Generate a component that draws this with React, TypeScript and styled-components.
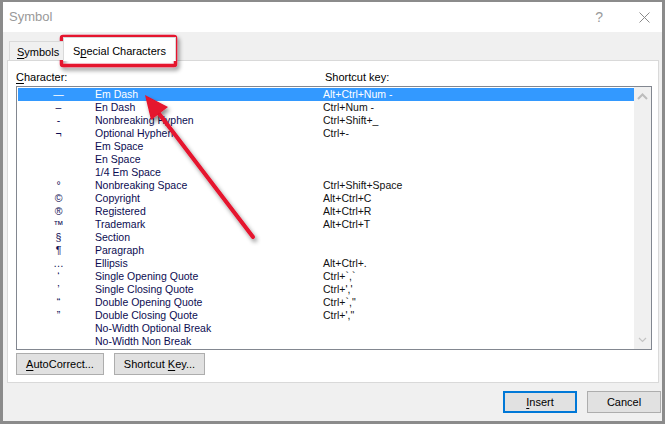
import styled, { createGlobalStyle } from "styled-components";

const GlobalStyle = createGlobalStyle`
  html, body {
    margin: 0;
    padding: 0;
    background: #ffffff;
  }
  body {
    font-family: "Liberation Sans", Arial, sans-serif;
  }
`;

type Entry = { char: string; name: string; keys: string };

const entries: Entry[] = [
  { char: "\u2014", name: "Em Dash", keys: "Alt+Ctrl+Num -" },
  { char: "\u2013", name: "En Dash", keys: "Ctrl+Num -" },
  { char: "-", name: "Nonbreaking Hyphen", keys: "Ctrl+Shift+_" },
  { char: "\u00ac", name: "Optional Hyphen", keys: "Ctrl+-" },
  { char: "", name: "Em Space", keys: "" },
  { char: "", name: "En Space", keys: "" },
  { char: "", name: "1/4 Em Space", keys: "" },
  { char: "\u00b0", name: "Nonbreaking Space", keys: "Ctrl+Shift+Space" },
  { char: "\u00a9", name: "Copyright", keys: "Alt+Ctrl+C" },
  { char: "\u00ae", name: "Registered", keys: "Alt+Ctrl+R" },
  { char: "\u2122", name: "Trademark", keys: "Alt+Ctrl+T" },
  { char: "\u00a7", name: "Section", keys: "" },
  { char: "\u00b6", name: "Paragraph", keys: "" },
  { char: "\u2026", name: "Ellipsis", keys: "Alt+Ctrl+." },
  { char: "\u2018", name: "Single Opening Quote", keys: "Ctrl+`,`" },
  { char: "\u2019", name: "Single Closing Quote", keys: "Ctrl+','" },
  { char: "\u201c", name: "Double Opening Quote", keys: "Ctrl+`,\"" },
  { char: "\u201d", name: "Double Closing Quote", keys: "Ctrl+',\"" },
  { char: "", name: "No-Width Optional Break", keys: "" },
  { char: "", name: "No-Width Non Break", keys: "" },
];

export default function App() {
  return (
    <>
      <GlobalStyle />
      <Window>
        <TitleBar>
          <Title>Symbol</Title>
          <TitleButtons>
            <HelpMark>?</HelpMark>
            <svg width="11" height="11" viewBox="0 0 11 11">
              <path d="M0.5 0.5 L10.5 10.5 M10.5 0.5 L0.5 10.5" stroke="#8a8a8a" strokeWidth="1" />
            </svg>
          </TitleButtons>
        </TitleBar>

        <Body>
          <TabStrip>
            <Tab>
              <u>S</u>ymbols
            </Tab>
            <Tab $active>
              S<u>p</u>ecial Characters
            </Tab>
          </TabStrip>

          <Panel>
            <Headers>
              <HeaderLabel $width={309}>
                <u>C</u>haracter:
              </HeaderLabel>
              <HeaderLabel>Shortcut key:</HeaderLabel>
            </Headers>

            <ListBox>
              <Rows>
                {entries.map((e, i) => (
                  <Row key={e.name} $selected={i === 0}>
                    <CharCell>{e.char}</CharCell>
                    <NameCell>{e.name}</NameCell>
                    <KeyCell $selected={i === 0}>{e.keys}</KeyCell>
                  </Row>
                ))}
              </Rows>
              <ScrollBar>
                <svg width="11" height="7" viewBox="0 0 11 7">
                  <path d="M1 6 L5.5 1.5 L10 6" fill="none" stroke="#bdbdbd" strokeWidth="2" />
                </svg>
                <svg width="9" height="6" viewBox="0 0 9 6">
                  <path d="M1 1 L4.5 4.5 L8 1" fill="none" stroke="#c4c4c4" strokeWidth="1.2" />
                </svg>
              </ScrollBar>
            </ListBox>

            <PanelButtons>
              <Button $width={88}>
                <u>A</u>utoCorrect...
              </Button>
              <Button $width={91}>
                Shortcut <u>K</u>ey...
              </Button>
            </PanelButtons>
          </Panel>

          <Footer>
            <Button $width={74} $default>
              <u>I</u>nsert
            </Button>
            <Button $width={74}>Cancel</Button>
          </Footer>
        </Body>

        <Annotation width="665" height="424" viewBox="0 0 665 424">
          <defs>
            <filter id="shadow" x="-20%" y="-20%" width="140%" height="140%">
              <feDropShadow dx="2" dy="3" stdDeviation="2" floodColor="#000" floodOpacity="0.45" />
            </filter>
          </defs>
          <g filter="url(#shadow)">
            <rect x="61.5" y="36.5" width="114" height="29" rx="1.5" fill="none" stroke="#e5122d" strokeWidth="3.5" />
            <line x1="253" y1="237" x2="157" y2="111" stroke="#e5122d" strokeWidth="4" strokeLinecap="round" />
            <polygon points="145,95 168,107 151,120" fill="#e5122d" />
          </g>
        </Annotation>
      </Window>
    </>
  );
}

const Window = styled.div`
  position: relative;
  box-sizing: border-box;
  width: 665px;
  height: 424px;
  border: 3px solid #8b8b8b;
  border-top-width: 2px;
  background: #f0f0f0;
  display: flex;
  flex-direction: column;
  overflow: hidden;
`;

const TitleBar = styled.div`
  height: 30px;
  background: #ffffff;
  display: flex;
  align-items: center;
  justify-content: space-between;
  padding: 0 12px 0 6px;
  flex-shrink: 0;
`;

const Title = styled.span`
  font-size: 13px;
  color: #999999;
  margin-top: -1px;
`;

const TitleButtons = styled.div`
  display: flex;
  align-items: center;
  gap: 36px;
`;

const HelpMark = styled.span`
  font-size: 14px;
  color: #9a9a9a;
`;

const Body = styled.div`
  flex: 1;
  display: flex;
  flex-direction: column;
  padding: 0 2px 0 4px;
`;

const TabStrip = styled.div`
  height: 28px;
  display: flex;
  align-items: flex-end;
  padding-left: 2px;
  position: relative;
  z-index: 1;
`;

const Tab = styled.div<{ $active?: boolean }>`
  box-sizing: border-box;
  font-size: 11px;
  color: #000000;
  white-space: nowrap;
  height: ${(p) => (p.$active ? "24px" : "19px")};
  line-height: ${(p) => (p.$active ? "20px" : "17px")};
  padding: ${(p) => (p.$active ? "3px 0 0 9px" : "2px 0 0 7px")};
  background: ${(p) => (p.$active ? "#ffffff" : "#f0f0f0")};
  border: 1px solid #d9d9d9;
  border-bottom: ${(p) => (p.$active ? "1px solid #ffffff" : "none")};
  margin-left: ${(p) => (p.$active ? "-1px" : "0")};
  margin-bottom: ${(p) => (p.$active ? "-1px" : "0")};
  width: ${(p) => (p.$active ? "113px" : "55px")};

  u {
    text-decoration-thickness: 1px;
    text-underline-offset: 2px;
  }
`;

const Panel = styled.div`
  box-sizing: border-box;
  width: 652px;
  height: 323px;
  background: #ffffff;
  border: 1px solid #d9d9d9;
  padding: 8px 0 0 8px;
  display: flex;
  flex-direction: column;
`;

const Headers = styled.div`
  display: flex;
  height: 16px;
  line-height: 16px;
  margin-bottom: 1px;
`;

const HeaderLabel = styled.span<{ $width?: number }>`
  font-size: 11px;
  color: #000000;
  width: ${(p) => (p.$width ? `${p.$width}px` : "auto")};

  u {
    text-underline-offset: 2px;
  }
`;

const ListBox = styled.div`
  box-sizing: border-box;
  width: 636px;
  height: 264px;
  border: 1px solid #828790;
  display: flex;
  padding: 1px 0 1px 1px;
`;

const Rows = styled.div`
  flex: 1;
  display: flex;
  flex-direction: column;
`;

const Row = styled.div<{ $selected?: boolean }>`
  display: grid;
  grid-template-columns: 77px 228px 1fr;
  height: 13px;
  line-height: 13px;
  font-size: 10.5px;
  background: ${(p) => (p.$selected ? "#3399ff" : "transparent")};
  color: ${(p) => (p.$selected ? "#ffffff" : "#0c0c52")};
  white-space: nowrap;
`;

const CharCell = styled.span`
  text-align: center;
  padding-left: 4px;
`;

const NameCell = styled.span``;

const KeyCell = styled.span<{ $selected?: boolean }>`
  color: ${(p) => (p.$selected ? "#ffffff" : "#111111")};
`;

const ScrollBar = styled.div`
  width: 17px;
  margin-top: -1px;
  margin-bottom: -1px;
  background: #f0f0f0;
  display: flex;
  flex-direction: column;
  justify-content: space-between;
  align-items: center;
  padding: 6px 0 6px;
`;

const PanelButtons = styled.div`
  display: flex;
  gap: 10px;
  margin-top: 3px;
`;

const Button = styled.div<{ $width: number; $default?: boolean }>`
  box-sizing: border-box;
  width: ${(p) => p.$width}px;
  height: 22px;
  line-height: ${(p) => (p.$default ? "18px" : "20px")};
  text-align: center;
  white-space: nowrap;
  background: #e1e1e1;
  border: ${(p) => (p.$default ? "2px solid #0078d7" : "1px solid #adadad")};
  font-size: 11px;
  color: #000000;

  u {
    text-underline-offset: 2px;
  }
`;

const Footer = styled.div`
  display: flex;
  justify-content: flex-end;
  gap: 10px;
  padding-top: 8px;
  margin-right: -1px;
`;

const Annotation = styled.svg`
  position: absolute;
  left: -3px;
  top: -2px;
  pointer-events: none;
`;
